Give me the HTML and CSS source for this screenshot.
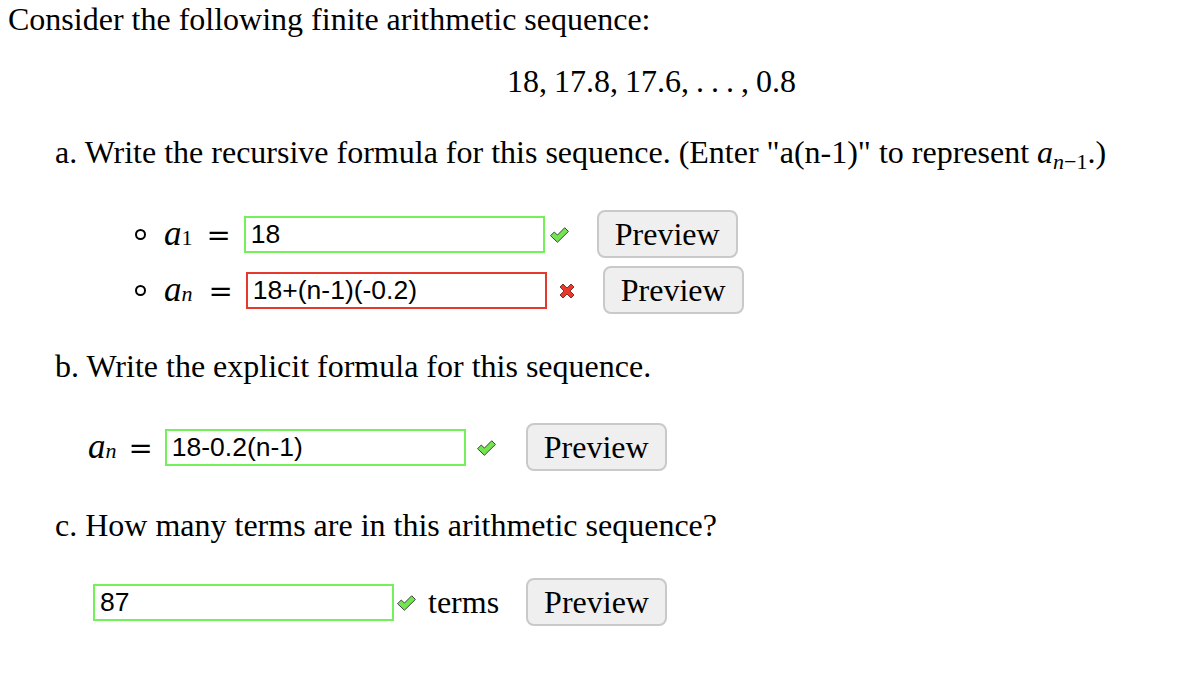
FILE: index.html
```html
<!DOCTYPE html>
<html lang="en">
<head>
    <meta charset="UTF-8">
    <meta name="viewport" content="width=device-width, initial-scale=1.0">
    <title>Arithmetic Sequence</title>
    <link rel="stylesheet" href="styles.css">
</head>
<body>
    <div class="problem">
        <p class="intro">Consider the following finite arithmetic sequence:</p>
        <div class="display">18, 17.8, 17.6, . . . , 0.8</div>

        <p class="part">a. Write the recursive formula for this sequence. (Enter "a(n-1)" to represent <span class="mi">a</span><sub class="msub"><span class="mi">n</span>−1</sub>.)</p>
        <ul class="answers">
            <li class="row row-a1">
                <span class="bullet"></span>
                <span class="math"><span class="mi">a</span><sub class="msub">1</sub><span class="eq">=</span></span>
                <input type="text" class="answer correct" value="18" readonly>
                <svg class="mark check" viewBox="0 0 20 16.5" width="19" height="16"><path d="M0.6 9 L4.5 5.1 L7.8 8.3 L15.5 0.6 L19.4 4.5 L7.8 15.9 Z" fill="#72e64f" stroke="#3a3a3a" stroke-width="1" stroke-linejoin="round"/></svg>
                <button class="preview">Preview</button>
            </li>
            <li class="row row-an">
                <span class="bullet"></span>
                <span class="math"><span class="mi">a</span><sub class="msub"><span class="mi">n</span></sub><span class="eq">=</span></span>
                <input type="text" class="answer incorrect" value="18+(n-1)(-0.2)" readonly>
                <svg class="mark cross" viewBox="0 0 16 16" width="16" height="16"><path d="M1 4 L4 1 L8 5 L12 1 L15 4 L11 8 L15 12 L12 15 L8 11 L4 15 L1 12 L5 8 Z" fill="#e8392b" stroke="#5a1a14" stroke-width="0.8" stroke-linejoin="round"/></svg>
                <button class="preview">Preview</button>
            </li>
        </ul>

        <p class="part part-b">b. Write the explicit formula for this sequence.</p>
        <div class="row row-b">
            <span class="math"><span class="mi">a</span><sub class="msub"><span class="mi">n</span></sub><span class="eq">=</span></span>
            <input type="text" class="answer correct" value="18-0.2(n-1)" readonly>
            <svg class="mark check" viewBox="0 0 20 16.5" width="19" height="16"><path d="M0.6 9 L4.5 5.1 L7.8 8.3 L15.5 0.6 L19.4 4.5 L7.8 15.9 Z" fill="#72e64f" stroke="#3a3a3a" stroke-width="1" stroke-linejoin="round"/></svg>
            <button class="preview">Preview</button>
        </div>

        <p class="part part-c">c. How many terms are in this arithmetic sequence?</p>
        <div class="row row-c">
            <input type="text" class="answer correct" value="87" readonly>
            <svg class="mark check" viewBox="0 0 20 16.5" width="19" height="16"><path d="M0.6 9 L4.5 5.1 L7.8 8.3 L15.5 0.6 L19.4 4.5 L7.8 15.9 Z" fill="#72e64f" stroke="#3a3a3a" stroke-width="1" stroke-linejoin="round"/></svg>
            <span class="unit">terms</span>
            <button class="preview">Preview</button>
        </div>
    </div>
</body>
</html>
```

FILE: styles.css
```css
body {
    font-family: "Liberation Serif", "Times New Roman", serif;
    font-size: 32px;
    line-height: 36px;
    color: #000;
    background: #fff;
    margin: 0;
    padding: 0 8px;
}
p {
    margin: 0;
}
.intro {
    margin-top: 1px;
}
.display {
    margin-top: 26px;
    padding-left: 115px;
    text-align: center;
    word-spacing: -1px;
}
.part {
    margin-top: 35px;
    padding-left: 47px;
}
.part-b {
    margin-top: 34px;
}
.part-c {
    margin-top: 36px;
}
.mi {
    font-style: italic;
}
.msub {
    font-size: 22px;
    vertical-align: -6px;
    line-height: 0;
}
.answers {
    list-style: none;
    margin: 40px 0 0;
    padding: 0 0 0 127px;
}
.row {
    display: flex;
    align-items: center;
    height: 48px;
}
.row-an {
    margin-top: 8px;
}
.bullet {
    width: 7px;
    height: 7px;
    border: 2px solid #000;
    border-radius: 50%;
    margin-right: 18px;
}
.math {
    display: flex;
    align-items: baseline;
    white-space: nowrap;
    font-size: 35px;
}
.eq {
    font-family: "DejaVu Serif", serif;
    font-size: 29px;
    margin: 0 13px 0 14px;
}
.row-an .eq {
    margin: 0 13px 0 16px;
}
.answer {
    box-sizing: border-box;
    width: 301px;
    height: 37px;
    padding: 0 5px;
    border: 2px solid #74f05a;
    font-family: "Liberation Sans", Arial, sans-serif;
    font-size: 26.5px;
    color: #000;
    background: #fff;
    outline: none;
}
.answer.incorrect {
    border-color: #e5392d;
}
.mark {
    flex: none;
}
.row-a1 .check {
    margin: 2px 28px 0 5px;
}
.row-an .cross {
    margin: 1px 28px 0 12px;
}
.row-b {
    margin-top: 39px;
    padding-left: 80px;
}
.row-b .eq {
    margin: 0 12px 0 12px;
}
.row-b .check {
    margin: 2px 30px 0 11px;
}
.row-c {
    margin-top: 35px;
    padding-left: 85px;
}
.row-c .check {
    margin: 2px 0 0 3px;
}
.unit {
    margin: 0 27px 0 12px;
}
.preview {
    box-sizing: border-box;
    height: 48px;
    padding: 0 16px;
    font-family: "Liberation Serif", "Times New Roman", serif;
    font-size: 32px;
    color: #000;
    background: #efefef;
    border: 2px solid #c9c9c9;
    border-radius: 8px;
    cursor: pointer;
}
```
